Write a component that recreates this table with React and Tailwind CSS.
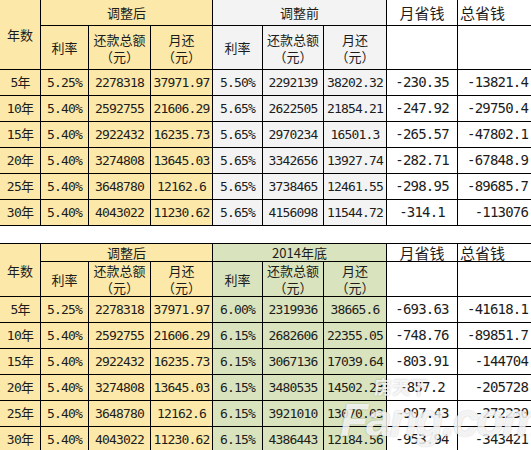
const rows1 = [
  ["5年", "5.25%", "2278318", "37971.97", "5.50%", "2292139", "38202.32", "-230.35", "-13821.4"],
  ["10年", "5.40%", "2592755", "21606.29", "5.65%", "2622505", "21854.21", "-247.92", "-29750.4"],
  ["15年", "5.40%", "2922432", "16235.73", "5.65%", "2970234", "16501.3", "-265.57", "-47802.1"],
  ["20年", "5.40%", "3274808", "13645.03", "5.65%", "3342656", "13927.74", "-282.71", "-67848.9"],
  ["25年", "5.40%", "3648780", "12162.6", "5.65%", "3738465", "12461.55", "-298.95", "-89685.7"],
  ["30年", "5.40%", "4043022", "11230.62", "5.65%", "4156098", "11544.72", "-314.1", "-113076"],
]

const rows2 = [
  ["5年", "5.25%", "2278318", "37971.97", "6.00%", "2319936", "38665.6", "-693.63", "-41618.1"],
  ["10年", "5.40%", "2592755", "21606.29", "6.15%", "2682606", "22355.05", "-748.76", "-89851.7"],
  ["15年", "5.40%", "2922432", "16235.73", "6.15%", "3067136", "17039.64", "-803.91", "-144704"],
  ["20年", "5.40%", "3274808", "13645.03", "6.15%", "3480535", "14502.23", "-857.2", "-205728"],
  ["25年", "5.40%", "3648780", "12162.6", "6.15%", "3921010", "13070.03", "-907.43", "-272230"],
  ["30年", "5.40%", "4043022", "11230.62", "6.15%", "4386443", "12184.56", "-953.94", "-343421"],
]

const cjk = "font-['Noto_Sans_CJK_SC',sans-serif] text-[13px] leading-[17px]"
const num = "font-['DejaVu_Sans_Mono','Noto_Sans_CJK_SC',monospace] text-[13px] tracking-[-0.8px]"
const cell = "p-0 border-black border-r border-b align-middle text-center"

function Cols() {
  return (
    <colgroup>
      <col className="w-[41px]" />
      <col className="w-[48px]" />
      <col className="w-[62px]" />
      <col className="w-[62px]" />
      <col className="w-[50px]" />
      <col className="w-[61px]" />
      <col className="w-[63px]" />
      <col className="w-[71px]" />
      <col className="w-[73px]" />
    </colgroup>
  )
}

function RateTable({ title, rows, mid, top, first, second }) {
  const yellow = "bg-[#fce8a8]"
  return (
    <table className="table-fixed border-separate border-spacing-0 w-[531px] text-[#1c1c1c]">
      <Cols />
      <tbody>
        <tr className={first}>
          <td rowSpan={2} className={`${cell} ${yellow} ${cjk} ${top}`}>年数</td>
          <td colSpan={3} className={`${cell} ${yellow} ${cjk} ${top}`}>调整后</td>
          <td colSpan={3} className={`${cell} ${mid} ${cjk} ${top}`}>{title}</td>
          <td className={`${cell} bg-white font-['Noto_Sans_CJK_SC',sans-serif] text-[15px] leading-[17px] ${top}`}>月省钱</td>
          <td className={`p-0 border-b border-black bg-white text-left pl-[2px] font-['Noto_Sans_CJK_SC',sans-serif] text-[15px] leading-[17px] ${top}`}>总省钱</td>
        </tr>
        <tr className={second}>
          <td className={`${cell} ${yellow} ${cjk}`}>利率</td>
          <td className={`${cell} ${yellow} ${cjk}`}>还款总额<br />（元）</td>
          <td className={`${cell} ${yellow} ${cjk}`}>月还<br />（元）</td>
          <td className={`${cell} ${mid} ${cjk}`}>利率</td>
          <td className={`${cell} ${mid} ${cjk}`}>还款总额<br />（元）</td>
          <td className={`${cell} ${mid} ${cjk}`}>月还<br />（元）</td>
          <td className={`${cell} bg-white`}></td>
          <td className="p-0 border-b border-black bg-white"></td>
        </tr>
        {rows.map((r) => (
          <tr key={r[0]} className="h-[26px]">
            {r.slice(0, 4).map((v, i) => (
              <td key={i} className={`${cell} ${yellow} ${num}`}>{v}</td>
            ))}
            {r.slice(4, 7).map((v, i) => (
              <td key={i} className={`${cell} ${mid} ${num}`}>{v}</td>
            ))}
            <td className={`${cell} bg-white ${num} text-[14px]`}>{r[7]}</td>
            <td className={`p-0 border-b border-black bg-white text-right pr-[3px] ${num} text-[14px]`}>{r[8]}</td>
          </tr>
        ))}
      </tbody>
    </table>
  )
}

export default function App() {
  return (
    <div className="relative w-[531px] h-[450px] overflow-hidden bg-white">
      <RateTable title="调整前" rows={rows1} mid="bg-[#f3f3f3]" top="" first="h-[26px]" second="h-[44px]" />
      <div className="h-[17px]"></div>
      <RateTable title="2014年底" rows={rows2} mid="bg-[#d9e3bd]" top="border-t" first="h-[19px]" second="h-[32px]" />
      <div className="absolute left-[340px] top-[376px] pointer-events-none select-none text-white/80 [text-shadow:0_0_2px_rgba(0,0,0,0.25)]">
        <div className="ml-[34px] font-['Noto_Sans_CJK_SC',sans-serif] text-[18px] leading-[20px] font-bold">房天下</div>
        <div className="font-['Liberation_Sans',sans-serif] italic font-bold text-[46px] leading-[48px] tracking-[-2px]">Fang.com</div>
      </div>
    </div>
  )
}
